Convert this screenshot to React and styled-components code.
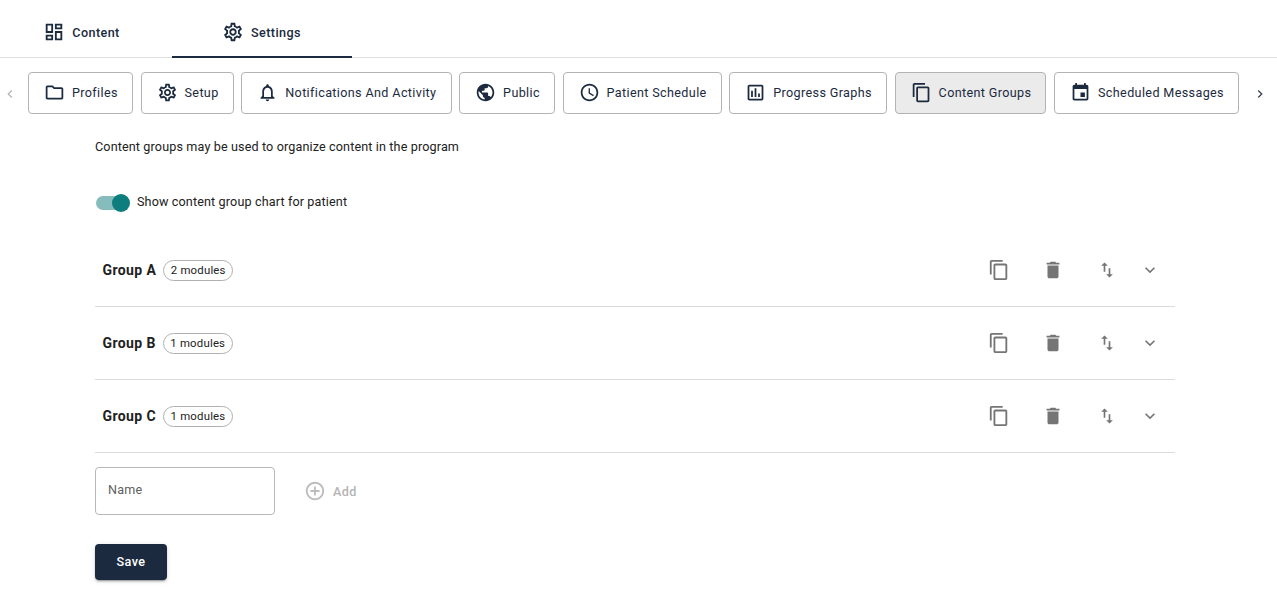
import React from "react";
import styled, { createGlobalStyle } from "styled-components";

const P = {
  dashboard: "M19 5v2h-4V5h4M9 5v6H5V5h4m10 8v6h-4v-6h4M9 17v2H5v-2h4M21 3h-8v6h8V3zM11 3H3v10h8V3zm10 8h-8v10h8V11zm-10 4H3v6h8v-6z",
  settings: "M19.43 12.98c.04-.32.07-.64.07-.98 0-.34-.03-.66-.07-.98l2.11-1.65c.19-.15.24-.42.12-.64l-2-3.46c-.09-.16-.26-.25-.44-.25-.06 0-.12.01-.17.03l-2.49 1c-.52-.4-1.08-.73-1.69-.98l-.38-2.65C14.46 2.18 14.25 2 14 2h-4c-.25 0-.46.18-.49.42l-.38 2.65c-.61.25-1.17.59-1.69.98l-2.49-1c-.06-.02-.12-.03-.18-.03-.17 0-.34.09-.43.25l-2 3.46c-.13.22-.07.49.12.64l2.11 1.65c-.04.32-.07.65-.07.98 0 .33.03.66.07.98l-2.11 1.65c-.19.15-.24.42-.12.64l2 3.46c.09.16.26.25.44.25.06 0 .12-.01.17-.03l2.49-1c.52.4 1.08.73 1.69.98l.38 2.65c.03.24.24.42.49.42h4c.25 0 .46-.18.49-.42l.38-2.65c.61-.25 1.17-.59 1.69-.98l2.49 1c.06.02.12.03.18.03.17 0 .34-.09.43-.25l2-3.46c.12-.22.07-.49-.12-.64l-2.11-1.65zm-1.98-1.71c.04.31.05.52.05.73 0 .21-.02.43-.05.73l-.14 1.13.89.7 1.08.84-.7 1.21-1.27-.51-1.04-.42-.9.68c-.43.32-.84.56-1.25.73l-1.06.43-.16 1.13-.2 1.35h-1.4l-.19-1.35-.16-1.13-1.06-.43c-.43-.18-.83-.41-1.23-.71l-.91-.7-1.06.43-1.27.51-.7-1.21 1.08-.84.89-.7-.14-1.13c-.03-.31-.05-.54-.05-.74s.02-.43.05-.73l.14-1.13-.89-.7-1.08-.84.7-1.21 1.27.51 1.04.42.9-.68c.43-.32.84-.56 1.25-.73l1.06-.43.16-1.13.2-1.35h1.39l.19 1.35.16 1.13 1.06.43c.43.18.83.41 1.23.71l.91.7 1.06-.43 1.27-.51.7 1.21-1.07.85-.89.7.14 1.13zM12 8c-2.21 0-4 1.79-4 4s1.79 4 4 4 4-1.79 4-4-1.79-4-4-4zm0 6c-1.1 0-2-.9-2-2s.9-2 2-2 2 .9 2 2-.9 2-2 2z",
  folder: "M9.17 6l2 2H20v10H4V6h5.17M10 4H4c-1.1 0-1.99.9-1.99 2L2 18c0 1.1.9 2 2 2h16c1.1 0 2-.9 2-2V8c0-1.1-.9-2-2-2h-8l-2-2z",
  bell: "M12 22c1.1 0 2-.9 2-2h-4c0 1.1.9 2 2 2zm6-6v-5c0-3.07-1.63-5.64-4.5-6.32V4c0-.83-.67-1.5-1.5-1.5s-1.5.67-1.5 1.5v.68C7.64 5.36 6 7.92 6 11v5l-2 2v1h16v-1l-2-2zm-2 1H8v-6c0-2.48 1.51-4.5 4-4.5s4 2.02 4 4.5v6z",
  globe: "M12 2C6.48 2 2 6.48 2 12s4.48 10 10 10 10-4.48 10-10S17.52 2 12 2zm-1 17.93c-3.95-.49-7-3.85-7-7.93 0-.62.08-1.21.21-1.79L9 15v1c0 1.1.9 2 2 2v1.93zm6.9-2.54c-.26-.81-1-1.39-1.9-1.39h-1v-3c0-.55-.45-1-1-1H8v-2h2c.55 0 1-.45 1-1V7h2c1.1 0 2-.9 2-2v-.41c2.93 1.19 5 4.06 5 7.41 0 2.08-.8 3.97-2.1 5.39z",
  clock: "M11.99 2C6.47 2 2 6.48 2 12s4.47 10 9.99 10C17.52 22 22 17.52 22 12S17.52 2 11.99 2zM12 20c-4.42 0-8-3.58-8-8s3.58-8 8-8 8 3.58 8 8-3.58 8-8 8zm.5-13H11v6l5.25 3.15.75-1.23-4.5-2.67z",
  chart: "M19 3H5c-1.1 0-2 .9-2 2v14c0 1.1.9 2 2 2h14c1.1 0 2-.9 2-2V5c0-1.1-.9-2-2-2zm0 16H5V5h14v14zM7 10h2v7H7zm4-3h2v10h-2zm4 6h2v4h-2z",
  copy: "M16 1H4c-1.1 0-2 .9-2 2v14h2V3h12V1zm3 4H8c-1.1 0-2 .9-2 2v14c0 1.1.9 2 2 2h11c1.1 0 2-.9 2-2V7c0-1.1-.9-2-2-2zm0 16H8V7h11v14z",
  event: "M17 12h-5v5h5v-5zM16 1v2H8V1H6v2H5c-1.11 0-1.99.9-1.99 2L3 19c0 1.1.89 2 2 2h14c1.1 0 2-.9 2-2V5c0-1.1-.9-2-2-2h-1V1h-2zm3 18H5V8h14v11z",
  trash: "M6 19c0 1.1.9 2 2 2h8c1.1 0 2-.9 2-2V7H6v12zM19 4h-3.5l-1-1h-5l-1 1H5v2h14V4z",
  swap: "M16 17.01V10h-2v7.01h-3L15 21l4-3.99h-3zM9 3L5 6.99h3V14h2V6.99h3L9 3z",
  expand: "M16.59 8.59L12 13.17 7.41 8.59 6 10l6 6 6-6z",
  left: "M15.41 7.41L14 6l-6 6 6 6 1.41-1.41L10.83 12z",
  right: "M10 6L8.59 7.41 13.17 12l-4.58 4.59L10 18l6-6z",
  add: "M13 7h-2v4H7v2h4v4h2v-4h4v-2h-4V7zm-1-5C6.48 2 2 6.48 2 12s4.48 10 10 10 10-4.48 10-10S17.52 2 12 2zm0 18c-4.41 0-8-3.59-8-8s3.59-8 8-8 8 3.59 8 8-3.59 8-8 8z",
};

const NAVY = "#1b2a3e";

const Global = createGlobalStyle`
  html, body { margin: 0; padding: 0; background: #fff; }
  body { font-family: Roboto, "Liberation Sans", sans-serif; color: #212121; overflow: hidden; }
`;

const Svg = styled.svg`
  display: block;
  flex: none;
  width: ${(p) => p.$size || 24}px;
  height: ${(p) => p.$size || 24}px;
  fill: ${(p) => p.$color || NAVY};
`;
const Icon = ({ name, size, color }) => (
  <Svg viewBox="0 0 24 24" $size={size} $color={color}><path d={P[name]} /></Svg>
);

const Page = styled.div`
  width: 1277px;
  height: 603px;
  overflow: hidden;
  background: #fff;
`;
const TabBar = styled.div`
  display: flex;
  height: 57px;
  margin-left: -8px;
  width: 1285px;
  border-bottom: 1px solid #e0e0e0;
`;
const Tab = styled.div`
  width: 180px;
  height: 58px;
  box-sizing: border-box;
  display: flex;
  align-items: center;
  justify-content: center;
  gap: 7px;
  padding-top: 8px;
  padding-right: 1px;
  font-size: 12.6px;
  font-weight: 500;
  letter-spacing: 0.4px;
  color: ${NAVY};
  border-bottom: 2px solid ${(p) => (p.$active ? NAVY : "transparent")};
`;
const ScrollRow = styled.div`
  display: flex;
  align-items: center;
  height: 42px;
  margin-top: 14px;
`;
const Arrow = styled.div`
  width: 20px;
  flex: none;
  display: flex;
  justify-content: center;
  margin: ${(p) => (p.$right ? "2px 0 0 11px" : "2px 8px 0 0")};
`;
const Chips = styled.div`
  display: flex;
  gap: 7.57px;
`;
const Chip = styled.div`
  height: 42px;
  box-sizing: border-box;
  padding: 0 14.1px 1px 15px;
  display: flex;
  align-items: center;
  gap: 7px;
  border: 1px solid #b3b3b3;
  border-radius: 4px;
  background: ${(p) => (p.$active ? "#ebebeb" : "#fff")};
  font-size: 12.6px;
  letter-spacing: 0.36px;
  color: ${NAVY};
  white-space: nowrap;
`;
const Body = styled.div`
  width: 1080px;
  margin-left: 95px;
`;
const Intro = styled.p`
  margin: 0;
  padding-top: 25px;
  font-size: 12.6px;
  line-height: 16px;
  letter-spacing: 0.13px;
  color: #212121;
`;
const ToggleRow = styled.label`
  display: flex;
  align-items: center;
  margin-top: 30px;
  height: 32px;
  font-size: 12.6px;
  letter-spacing: 0.13px;
`;
const Toggle = styled.span`
  position: relative;
  display: block;
  width: 24px;
  height: 14px;
  margin: 4px 17px 0 1px;
  border-radius: 7px;
  background: #86bcbc;
  &::after {
    content: "";
    position: absolute;
    right: -10px;
    top: -2px;
    width: 18px;
    height: 18px;
    border-radius: 50%;
    background: #0d7d7d;
  }
`;
const List = styled.div`
  margin-top: 17px;
`;
const Row = styled.div`
  display: flex;
  align-items: center;
  height: 73px;
  box-sizing: border-box;
  padding-left: 7.5px;
  border-bottom: 1px solid #dcdcdc;
`;
const GroupName = styled.div`
  font-size: 14px;
  font-weight: 700;
  letter-spacing: 0.4px;
  color: #212121;
`;
const Count = styled.div`
  margin-left: 7px;
  height: 21px;
  box-sizing: border-box;
  padding: 0 6.5px;
  display: flex;
  align-items: center;
  border: 1px solid #b0b0b0;
  border-radius: 11px;
  font-size: 11.4px;
  letter-spacing: 0.2px;
  color: #212121;
`;
const Actions = styled.div`
  margin-left: auto;
  display: flex;
  align-items: center;
  padding-right: 9px;
`;
const Action = styled.div`
  width: ${(p) => p.$w}px;
  display: flex;
  justify-content: center;
`;
const AddRow = styled.div`
  display: flex;
  align-items: center;
  margin-top: 14px;
`;
const NameBox = styled.div`
  width: 180px;
  height: 48px;
  box-sizing: border-box;
  border: 1px solid #b8b8b8;
  border-radius: 4px;
  padding: 0 12px 3px;
  display: flex;
  align-items: center;
  font-size: 12.6px;
  letter-spacing: 0.2px;
  color: #5f5f5f;
`;
const AddButton = styled.div`
  display: flex;
  align-items: center;
  gap: 7px;
  margin-left: 29px;
  font-size: 12.6px;
  font-weight: 500;
  letter-spacing: 0.4px;
  color: #b4b4b4;
`;
const Save = styled.div`
  width: 72px;
  height: 36px;
  box-sizing: border-box;
  padding-bottom: 1px;
  margin-top: 29px;
  border-radius: 4px;
  display: flex;
  align-items: center;
  justify-content: center;
  background: ${NAVY};
  color: #fff;
  font-size: 12.6px;
  font-weight: 500;
  letter-spacing: 0.4px;
  box-shadow: 0 3px 1px -2px rgba(0,0,0,.2), 0 2px 2px 0 rgba(0,0,0,.14), 0 1px 5px 0 rgba(0,0,0,.12);
`;

const chips = [
  ["folder", "Profiles"],
  ["settings", "Setup"],
  ["bell", "Notifications And Activity"],
  ["globe", "Public"],
  ["clock", "Patient Schedule"],
  ["chart", "Progress Graphs"],
  ["copy", "Content Groups", true],
  ["event", "Scheduled Messages"],
];
const groups = [["Group A", "2 modules"], ["Group B", "1 modules"], ["Group C", "1 modules"]];
const GREY = "#757575";

export default function App() {
  return (
    <Page>
      <Global />
      <TabBar>
        <Tab><Icon name="dashboard" size={22} />Content</Tab>
        <Tab $active><Icon name="settings" size={22} />Settings</Tab>
      </TabBar>
      <ScrollRow>
        <Arrow><Icon name="left" size={16} color="#b5b5b5" /></Arrow>
        <Chips>
          {chips.map(([icon, label, active]) => (
            <Chip key={label} $active={active}><Icon name={icon} size={21} />{label}</Chip>
          ))}
        </Chips>
        <Arrow $right><Icon name="right" size={16} color="#3a4757" /></Arrow>
      </ScrollRow>
      <Body>
        <Intro>Content groups may be used to organize content in the program</Intro>
        <ToggleRow><Toggle />Show content group chart for patient</ToggleRow>
        <List>
          {groups.map(([name, count]) => (
            <Row key={name}>
              <GroupName>{name}</GroupName>
              <Count>{count}</Count>
              <Actions>
                <Action $w={54}><Icon name="copy" size={22} color={GREY} /></Action>
                <Action $w={54}><Icon name="trash" size={22} color={GREY} /></Action>
                <Action $w={54}><Icon name="swap" size={20} color={GREY} /></Action>
                <Action $w={32}><Icon name="expand" size={20} color={GREY} /></Action>
              </Actions>
            </Row>
          ))}
        </List>
        <AddRow>
          <NameBox>Name</NameBox>
          <AddButton><Icon name="add" size={22} color="#bdbdbd" />Add</AddButton>
        </AddRow>
        <Save>Save</Save>
      </Body>
    </Page>
  );
}
